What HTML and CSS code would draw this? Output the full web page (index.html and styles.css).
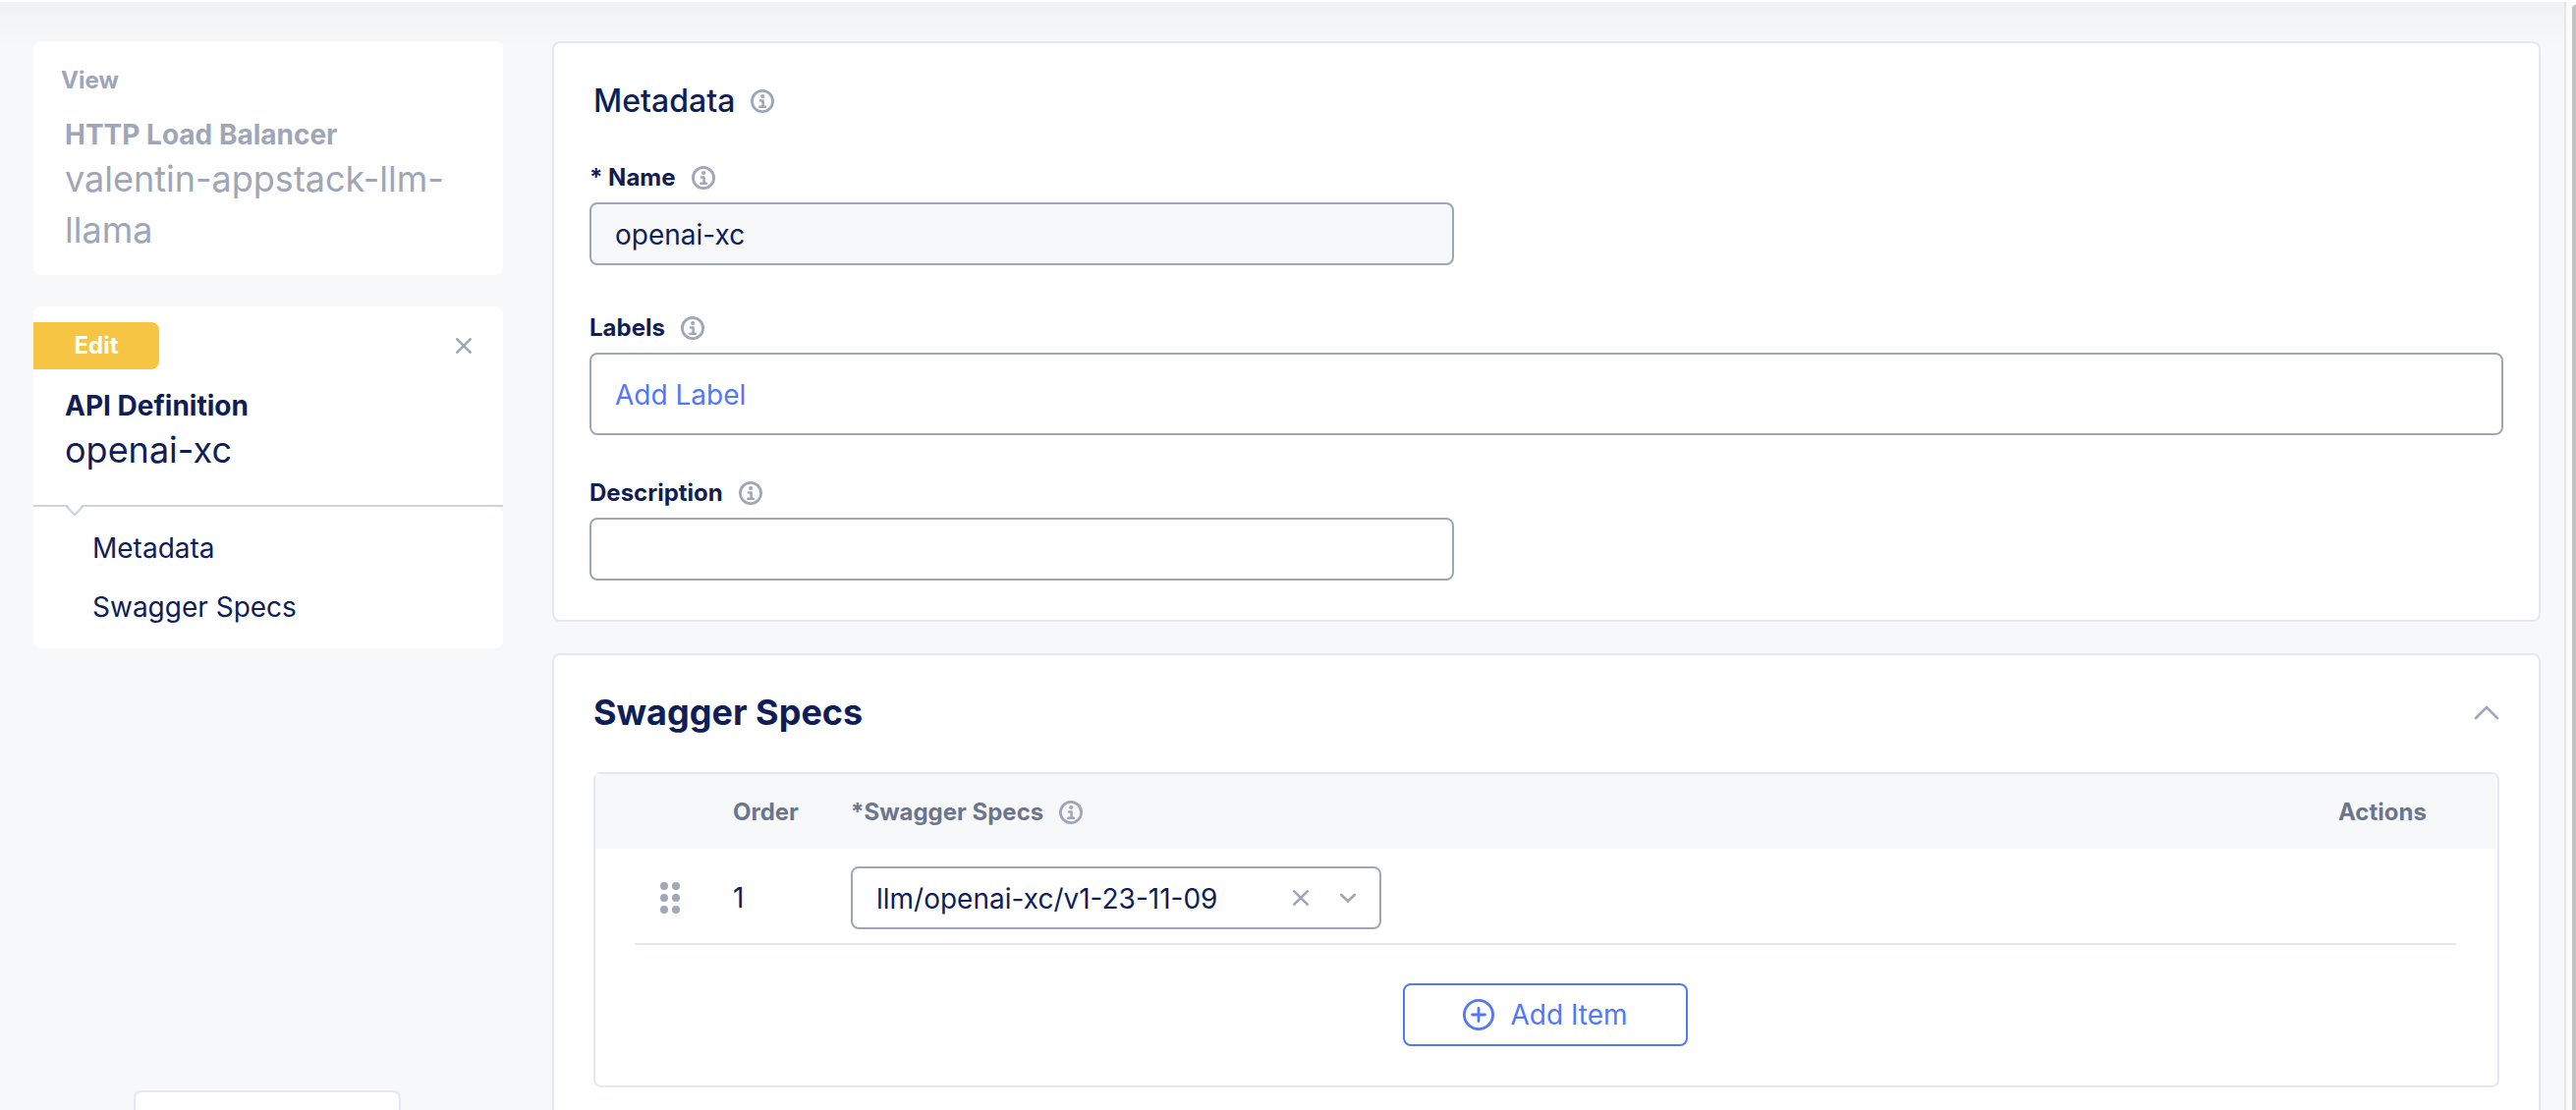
FILE: index.html
```html
<!DOCTYPE html>
<html lang="en">
<head>
<meta charset="utf-8">
<title>API Definition</title>
<link rel="stylesheet" href="styles.css">
</head>
<body>
<svg class="sprite" aria-hidden="true">
  <symbol id="info" viewBox="0 0 24 24">
    <circle cx="12" cy="12" r="10.6" fill="none" stroke="currentColor" stroke-width="2.8"/>
    <circle cx="12.200" cy="7" r="2.100" fill="currentColor"/>
    <path d="M9.900 11.600h2.700v6M9.300 17.800h5.600" fill="none" stroke="currentColor" stroke-width="2.500" stroke-linecap="round" stroke-linejoin="round"/>
  </symbol>
  <symbol id="cross" viewBox="0 0 16 16">
    <path d="M1.300 1.300l13.400 13.400M14.700 1.300l-13.400 13.400" fill="none" stroke="currentColor" stroke-width="2.600" stroke-linecap="round"/>
  </symbol>
</svg>
<div class="shell">
  <aside class="sidebar">
    <section class="card view-card">
      <p class="mode">View</p>
      <h2 class="kind">HTTP Load Balancer</h2>
      <p class="object-name">valentin-appstack-llm-llama</p>
    </section>
    <section class="card edit-card">
      <div class="edit-top">
        <span class="badge">Edit</span>
        <button class="icon-button" type="button" aria-label="Close"><svg class="icon-cross"><use href="#cross"/></svg></button>
      </div>
      <h2 class="kind">API Definition</h2>
      <p class="object-name">openai-xc</p>
      <svg class="notch" viewBox="0 0 20 13" aria-hidden="true">
        <path d="M2 0L10 9L18 0Z" fill="#fff"/>
        <path d="M1 2L10 11L19 2" fill="none" stroke="#d0d2e3" stroke-width="2"/>
      </svg>
    </section>
    <nav class="card sections">
      <a href="#metadata">Metadata</a>
      <a href="#swagger">Swagger Specs</a>
    </nav>
    <button class="footer-button" type="button" aria-label="More"></button>
  </aside>

  <main class="content">
    <section class="panel metadata" id="metadata">
      <h2 class="panel-title">Metadata <svg class="icon-info"><use href="#info"/></svg></h2>
      <div class="field">
        <label class="field-label" for="name">* Name <svg class="icon-info"><use href="#info"/></svg></label>
        <input class="text-input short" id="name" type="text" value="openai-xc" readonly>
      </div>
      <div class="field">
        <label class="field-label" for="labels">Labels <svg class="icon-info"><use href="#info"/></svg></label>
        <input class="text-input tall" id="labels" type="text" placeholder="Add Label">
      </div>
      <div class="field">
        <label class="field-label" for="description">Description <svg class="icon-info"><use href="#info"/></svg></label>
        <input class="text-input short" id="description" type="text">
      </div>
    </section>

    <section class="panel swagger" id="swagger">
      <header class="panel-head">
        <h2 class="panel-heading">Swagger Specs</h2>
        <button class="icon-button" type="button" aria-label="Collapse"><svg class="icon-collapse" viewBox="0 0 26 16"><path d="M2 14L13 3L24 14" fill="none" stroke="currentColor" stroke-width="2.6" stroke-linecap="round"/></svg></button>
      </header>
      <div class="spec-box">
        <table class="spec-table">
          <thead>
            <tr>
              <th class="col-handle"></th>
              <th class="col-order">Order</th>
              <th><span class="th-label" id="spec-label">*Swagger Specs <svg class="icon-info"><use href="#info"/></svg></span></th>
              <th class="col-actions">Actions</th>
            </tr>
          </thead>
          <tbody>
            <tr>
              <td class="col-handle">
                <svg class="icon-grip" viewBox="0 0 20 32" fill="currentColor"><circle cx="4" cy="4" r="4"/><circle cx="16" cy="4" r="4"/><circle cx="4" cy="16" r="4"/><circle cx="16" cy="16" r="4"/><circle cx="4" cy="28" r="4"/><circle cx="16" cy="28" r="4"/></svg>
              </td>
              <td>1</td>
              <td>
                <div class="select">
                  <select aria-labelledby="spec-label"><option>llm/openai-xc/v1-23-11-09</option></select>
                  <button class="icon-button" type="button" aria-label="Clear"><svg class="icon-cross"><use href="#cross"/></svg></button>
                  <svg class="icon-down" viewBox="0 0 16 16"><path d="M1.300 5L8 11.500L14.700 5" fill="none" stroke="currentColor" stroke-width="2.600" stroke-linecap="round"/></svg>
                </div>
              </td>
              <td></td>
            </tr>
          </tbody>
        </table>
        <div class="add-row">
          <button class="add-button" type="button">
            <svg class="icon-plus" viewBox="0 0 32 32" fill="none" stroke="currentColor" stroke-width="2.800" stroke-linecap="round"><circle cx="16" cy="16" r="14.600"/><path d="M16 9.500v13M9.500 16h13"/></svg>
            Add Item
          </button>
        </div>
      </div>
    </section>
  </main>
  <div class="scroll-track" aria-hidden="true"><div class="scroll-thumb"></div></div>
</div>
</body>
</html>
```
FILE: styles.css
```css
* {
  box-sizing: border-box;
}

body {
  margin: 0;
  background: #f7f8fa;
  color: #0f1e57;
  font: 400 28px/36px Inter, "Open Sans", sans-serif;
}

h2,
p {
  margin: 0;
}

button,
input,
select {
  padding: 0;
  border: 0;
  background: none;
  color: inherit;
  font: inherit;
}

svg {
  display: block;
  flex: none;
  overflow: visible;
}

.sprite {
  position: absolute;
  width: 0;
  height: 0;
}

.shell {
  display: flex;
  height: 100vh;
  overflow: hidden;
  border-top: 2px solid #fff;
  background: linear-gradient(#f1f2f4, #f7f8fa 46px);
}

/* Sidebar */
.sidebar {
  display: flex;
  flex: none;
  flex-direction: column;
  width: 512px;
  padding: 40px 0 0 34px;
}

.card {
  border-radius: 8px;
  background: #fff;
}

.view-card {
  padding: 22px 0 20px;
  color: #9ea6b8;
}

.mode {
  padding-left: 28px;
  font-size: 24px;
  font-weight: 700;
}

.kind {
  padding: 0 32px;
  font-size: 28px;
  font-weight: 700;
}

.view-card .kind {
  margin-top: 19px;
}

.object-name {
  padding: 1px 32px 0;
  font-size: 36px;
  line-height: 52px;
}

.edit-card {
  position: relative;
  margin-top: 32px;
  padding: 16px 0 30px;
  border-bottom: 2px solid #d0d2e3;
  border-radius: 8px 8px 0 0;
}

.edit-top {
  display: flex;
  align-items: center;
  justify-content: space-between;
  margin-bottom: 19px;
  padding-right: 32px;
}

.badge {
  width: 128px;
  border-radius: 0 8px 8px 0;
  background: #f6c544;
  color: #fff;
  font-size: 24px;
  font-weight: 700;
  line-height: 48px;
  text-align: center;
}

.notch {
  position: absolute;
  bottom: -12px;
  left: 32px;
  width: 20px;
  height: 13px;
}

.sections {
  display: flex;
  flex-direction: column;
  gap: 24px;
  padding: 24px 60px;
}

.sections a {
  color: inherit;
  text-decoration: none;
}

.footer-button {
  width: 272px;
  height: 64px;
  flex: none;
  margin: auto 0 -44px 102px;
  border: 2px solid #e5e8f1;
  border-radius: 8px;
  background: #fff;
}

/* Panels */
.content {
  flex: 1;
  min-width: 0;
  padding: 40px 24px 0 50px;
}

.panel {
  border: 2px solid #e5e8f1;
  border-radius: 8px;
  background: #fff;
}

.metadata {
  padding: 41px 36px 40px;
}

.panel-title,
.field-label,
.th-label {
  display: flex;
  align-items: center;
  gap: 16px;
}

.panel-title {
  margin-bottom: 42px;
  padding-left: 4px;
  font-size: 32px;
  font-weight: 500;
}

.field + .field {
  margin-top: 46px;
}

.field:last-child {
  margin-top: 41px;
}

.field-label {
  margin-bottom: 7px;
  font-size: 24px;
  font-weight: 700;
}

.text-input {
  display: block;
  width: 100%;
  height: 64px;
  padding: 2px 24px 0;
  border: 2px solid #9ea6b8;
  border-radius: 8px;
  background: #fff;
}

.text-input:read-only {
  background: #f7f8fa;
}

.text-input.short {
  width: 880px;
  max-width: 100%;
}

.text-input.tall {
  height: 84px;
}

.text-input::placeholder {
  color: #5277f7;
  opacity: 1;
}

.icon-button {
  color: #9ea6b8;
}

.icon-info {
  width: 24px;
  height: 24px;
  color: #9ea6b8;
}

.icon-cross,
.icon-down {
  width: 16px;
  height: 16px;
}

.icon-down {
  color: #9ea6b8;
}

.swagger {
  margin-top: 32px;
  padding: 36px 40px 60px;
}

.panel-head {
  display: flex;
  align-items: center;
  justify-content: space-between;
  margin-bottom: 39px;
}

.panel-heading {
  font-size: 36px;
  font-weight: 700;
  line-height: 44px;
}

.icon-collapse {
  width: 26px;
  height: 20px;
}

.spec-box {
  padding-right: 2px;
  border: 2px solid #e5e8f1;
  border-radius: 8px;
}

.spec-table {
  width: 100%;
  border-collapse: collapse;
  text-align: left;
}

.spec-table th {
  height: 76px;
  padding: 2px 0 0;
  background: #f7f8fa;
  color: #6b768c;
  font-size: 24px;
  font-weight: 700;
}

.spec-table td {
  padding: 18px 0 16px;
}

.spec-table tbody tr {
  background: linear-gradient(#e5e8f1, #e5e8f1) no-repeat 40px 100% / calc(100% - 80px) 2px;
}

.spec-table .col-handle {
  width: 140px;
  padding-left: 66px;
}

.spec-table .col-order {
  width: 120px;
}

.spec-table .col-actions {
  width: 160px;
}

.icon-grip {
  width: 20px;
  height: 32px;
  color: #9ea6b8;
}

.select {
  display: flex;
  align-items: center;
  width: 540px;
  height: 64px;
  padding: 0 24px;
  border: 2px solid #9ea6b8;
  border-radius: 8px;
}

.select select {
  flex: 1;
  min-width: 0;
  height: 100%;
  padding-top: 2px;
  appearance: none;
}

.select .icon-down {
  margin-left: 32px;
}

.add-row {
  display: flex;
  justify-content: center;
  padding: 39px 0 40px;
}

.add-button {
  display: flex;
  align-items: center;
  justify-content: center;
  gap: 16px;
  width: 290px;
  height: 64px;
  border: 2px solid #5277f7;
  border-radius: 8px;
  color: #5277f7;
}

.icon-plus {
  width: 32px;
  height: 32px;
}

/* Scroll bar */
.scroll-track {
  flex: none;
  width: 12px;
  padding: 3px 0 0 6px;
  border-left: 2px solid #e6e6e6;
  background: #fafafa;
}

.scroll-thumb {
  height: 100%;
  border-radius: 8px 0 0 0;
  background: #c1c1c1;
}
```
